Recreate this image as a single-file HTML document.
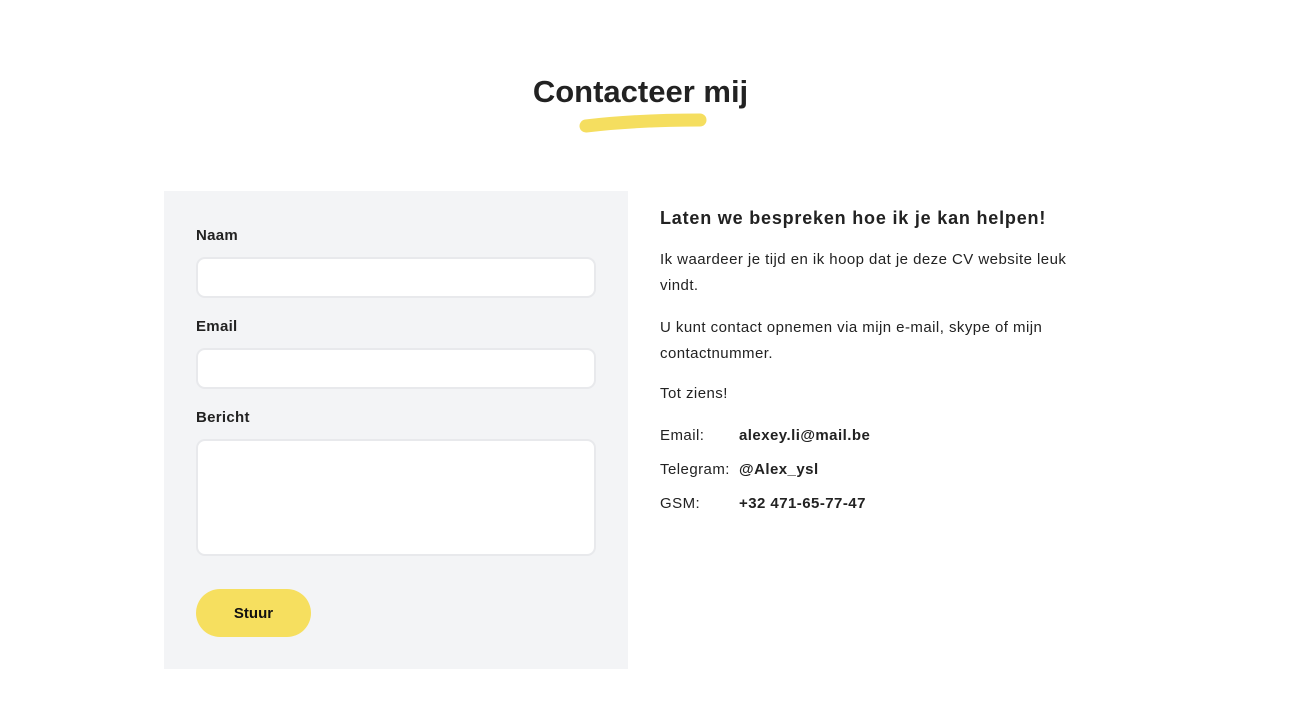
<!DOCTYPE html>
<html><head><meta charset="utf-8"><style>
body{margin:0;width:1313px;height:726px;background:#fff;font-family:"Liberation Sans",sans-serif;color:#222;position:relative;overflow:hidden}
.a{position:absolute}
h1{position:absolute;left:0;width:1281px;text-align:center;top:74px;margin:0;font-size:31px;font-weight:bold;color:#222}
.panel{left:164px;top:191px;width:464px;height:478px;background:#f3f4f6}
.lbl{left:196px;font-size:15px;font-weight:bold;color:#222;letter-spacing:0.3px}
.in{left:196px;width:396px;background:#fff;border:2px solid #e8e9ec;border-radius:9px}
.btn{left:196px;top:589px;width:115px;height:48px;border-radius:24px;background:#f6df5f;font-size:15px;font-weight:bold;text-align:center;line-height:50px;color:#111}
.r{left:660px;font-size:15px;color:#222;letter-spacing:0.45px}
</style></head><body>
<h1>Contacteer mij</h1>
<svg class="a" style="left:576px;top:110px" width="134" height="24"><path d="M10 16 Q60 10 124 10" stroke="#f5de5f" stroke-width="13" stroke-linecap="round" fill="none"/></svg>
<div class="a panel"></div>
<div class="a lbl" style="top:227px">Naam</div>
<div class="a in" style="top:257px;height:37px"></div>
<div class="a lbl" style="top:318px">Email</div>
<div class="a in" style="top:348px;height:37px"></div>
<div class="a lbl" style="top:409px">Bericht</div>
<div class="a in" style="top:439px;height:113px"></div>
<div class="a btn">Stuur</div>
<div class="a r" style="top:208px;font-size:18px;font-weight:bold;letter-spacing:0.8px">Laten we bespreken hoe ik je kan helpen!</div>
<div class="a r" style="top:247px;width:430px;line-height:26px">Ik waardeer je tijd en ik hoop dat je deze CV website leuk vindt.</div>
<div class="a r" style="top:315px;width:430px;line-height:26px">U kunt contact opnemen via mijn e-mail, skype of mijn contactnummer.</div>
<div class="a r" style="top:385px">Tot ziens!</div>
<div class="a r" style="top:427px">Email:</div><div class="a r" style="top:427px;left:739px;font-weight:bold">alexey.li@mail.be</div>
<div class="a r" style="top:461px">Telegram:</div><div class="a r" style="top:461px;left:739px;font-weight:bold">@Alex_ysl</div>
<div class="a r" style="top:495px">GSM:</div><div class="a r" style="top:495px;left:739px;font-weight:bold">+32 471-65-77-47</div>
</body></html>
